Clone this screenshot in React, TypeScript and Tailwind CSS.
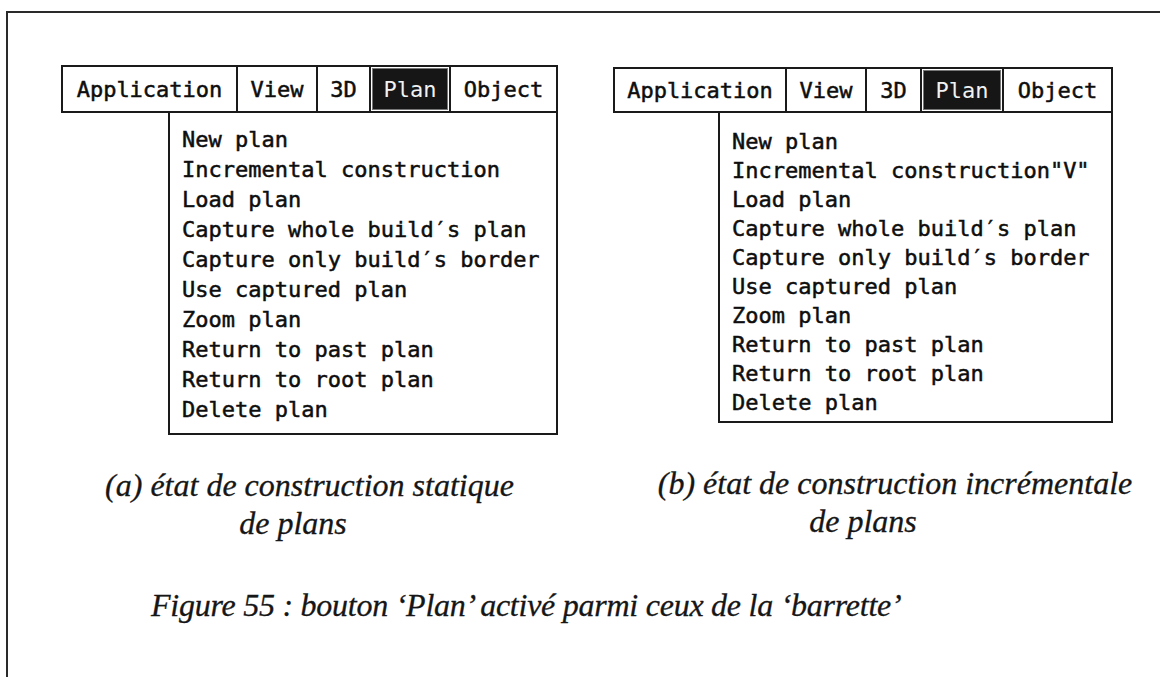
import React from 'react';

type Spec = {
  top: string;
  barH: string;
  cells: string[]; // widths for Application, View, 3D, Plan
  menuLeft: string;
  menuPad: string;
  rowH: string;
  items: string[];
};

const mono = { fontFamily: '"DejaVu Sans Mono", "Liberation Mono", monospace' };
const serif = { fontFamily: '"Liberation Serif", "DejaVu Serif", serif' };

const MenuBar = ({ spec }: { spec: Spec }) => (
  <div className={spec.top} style={mono}>
    <div className={`flex border-2 border-[#1a1a1a] text-[22px] text-[#0e0e0e] [-webkit-text-stroke:0.5px_#0e0e0e] ${spec.barH}`}>
      <div className={`flex items-center justify-center ${spec.cells[0]}`}>Application</div>
      <div className={`flex items-center justify-center border-l-2 border-[#1a1a1a] ${spec.cells[1]}`}>View</div>
      <div className={`flex items-center justify-center border-l-2 border-[#1a1a1a] ${spec.cells[2]}`}>3D</div>
      <div className={`flex border-l-2 border-[#1a1a1a] p-[1px] ${spec.cells[3]}`}>
        <div className="flex flex-1 items-center justify-center border border-[#777] bg-[#161616] text-[#f2f2f2] [-webkit-text-stroke:0px]">Plan</div>
      </div>
      <div className="flex flex-1 items-center justify-center border-l-2 border-[#1a1a1a]">Object</div>
    </div>
    <div className={`border-2 border-t-0 border-[#1a1a1a] pl-[12px] text-[22px] text-[#0e0e0e] [-webkit-text-stroke:0.5px_#0e0e0e] ${spec.menuLeft} ${spec.menuPad}`}>
      {spec.items.map((it) => (
        <div key={it} className={`whitespace-nowrap ${spec.rowH}`}>{it}</div>
      ))}
    </div>
  </div>
);

const itemsA = [
  'New plan',
  'Incremental construction',
  'Load plan',
  'Capture whole build′s plan',
  'Capture only build′s border',
  'Use captured plan',
  'Zoom plan',
  'Return to past plan',
  'Return to root plan',
  'Delete plan',
];
const itemsB = itemsA.map((s, i) => (i === 1 ? 'Incremental construction"V"' : s));

export default function App() {
  const specA: Spec = {
    top: 'mt-0',
    barH: 'h-[48px]',
    cells: ['w-[173px]', 'w-[80px]', 'w-[53px]', 'w-[80px]'],
    menuLeft: 'ml-[107px]',
    menuPad: 'pt-[12px] pb-[8px]',
    rowH: 'h-[30px] leading-[30px]',
    items: itemsA,
  };
  const specB: Spec = {
    top: 'mt-[2px]',
    barH: 'h-[46px]',
    cells: ['w-[170px]', 'w-[80px]', 'w-[55px]', 'w-[82px]'],
    menuLeft: 'ml-[105px]',
    menuPad: 'pt-[14px] pb-[4px]',
    rowH: 'h-[29px] leading-[29px]',
    items: itemsB,
  };

  return (
    <div className="h-[677px] w-[1160px] overflow-hidden bg-white pl-[6px] pt-[11px]">
      <div className="h-full border-l-2 border-t-2 border-[#2a2a2a] pt-[52px]">
        <div className="flex items-start">
          {/* (a) */}
          <div className="ml-[53px] w-[497px]">
            <MenuBar spec={specA} />
            <div className="mt-[31px] text-[32px] italic leading-[38px] text-[#161616] [-webkit-text-stroke:0.3px_#161616]" style={serif}>
              <div className="flex justify-center whitespace-nowrap">(a) état de construction statique</div>
              <div className="flex justify-center whitespace-nowrap pr-[33px]">de plans</div>
            </div>
          </div>
          {/* (b) */}
          <div className="ml-[55px] w-[500px]">
            <MenuBar spec={specB} />
            <div className="mt-[41px] text-[32px] italic leading-[38px] text-[#161616] [-webkit-text-stroke:0.3px_#161616]" style={serif}>
              <div className="flex justify-center whitespace-nowrap pl-[64px]">(b) état de construction incrémentale</div>
              <div className="flex justify-center whitespace-nowrap">de plans</div>
            </div>
          </div>
        </div>
        <div className="ml-[143px] mt-[44px] whitespace-nowrap text-[32px] italic leading-[38px] tracking-[-0.25px] text-[#161616] [-webkit-text-stroke:0.3px_#161616]" style={serif}>
          Figure 55 : bouton ‘Plan’ activé parmi ceux de la ‘barrette’
        </div>
      </div>
    </div>
  );
}
